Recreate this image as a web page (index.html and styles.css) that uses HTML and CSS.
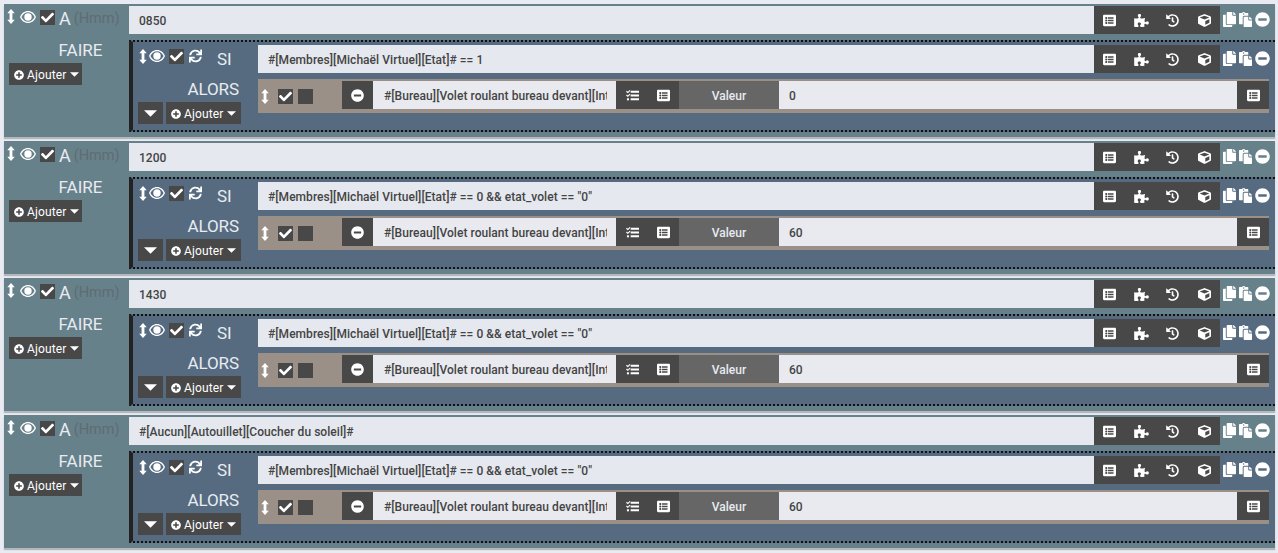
FILE: index.html
```html
<!DOCTYPE html>
<html lang="fr">
<head>
<meta charset="utf-8">
<title>Scénario</title>
<link rel="stylesheet" href="styles.css">
</head>
<body>
<svg class="sprite" xmlns="http://www.w3.org/2000/svg">
<symbol id="i-list" viewBox="0 0 512 512"><path d="M464 480H48c-26.51 0-48-21.49-48-48V80c0-26.51 21.49-48 48-48h416c26.51 0 48 21.49 48 48v352c0 26.51-21.49 48-48 48zM128 120c-22.091 0-40 17.909-40 40s17.909 40 40 40 40-17.909 40-40-17.909-40-40-40zm0 96c-22.091 0-40 17.909-40 40s17.909 40 40 40 40-17.909 40-40-17.909-40-40-40zm0 96c-22.091 0-40 17.909-40 40s17.909 40 40 40 40-17.909 40-40-17.909-40-40-40zm288-136v-32c0-6.627-5.373-12-12-12H204c-6.627 0-12 5.373-12 12v32c0 6.627 5.373 12 12 12h200c6.627 0 12-5.373 12-12zm0 96v-32c0-6.627-5.373-12-12-12H204c-6.627 0-12 5.373-12 12v32c0 6.627 5.373 12 12 12h200c6.627 0 12-5.373 12-12zm0 96v-32c0-6.627-5.373-12-12-12H204c-6.627 0-12 5.373-12 12v32c0 6.627 5.373 12 12 12h200c6.627 0 12-5.373 12-12z"/></symbol>
<symbol id="i-puzzle" viewBox="0 0 576 512"><path d="M519.442 288.651c-41.519 0-59.5 31.593-82.058 31.593C377.409 320.244 432 144 432 144s-196.288 80-196.288-3.297c0-35.827 36.288-46.25 36.288-85.985C272 19.216 243.885 0 210.539 0c-34.654 0-66.366 18.891-66.366 56.346 0 41.364 31.711 59.277 31.711 81.75C175.885 207.719 0 166.758 0 166.758v333.237s178.635 41.047 178.635-28.662c0-22.473-40-40.107-40-81.471 0-37.456 29.25-56.346 63.577-56.346 33.673 0 61.788 19.216 61.788 54.717 0 39.735-36.288 50.158-36.288 85.985 0 60.803 129.675 25.73 181.23 25.73 0 0-34.725-120.101 25.827-120.101 35.962 0 46.423 36.152 86.308 36.152C556.712 416 576 387.99 576 354.443c0-34.199-18.962-65.792-56.558-65.792z"/></symbol>
<symbol id="i-history" viewBox="0 0 512 512"><path d="M504 255.531c.253 136.64-111.18 248.372-247.82 248.468-59.015.042-113.223-20.53-155.822-54.911-11.077-8.94-11.905-25.541-1.839-35.607l11.267-11.267c8.609-8.609 22.353-9.551 31.891-1.984C173.062 425.135 212.781 440 256 440c101.705 0 184-82.311 184-184 0-101.705-82.311-184-184-184-48.814 0-93.149 18.969-126.068 49.932l50.754 50.754c10.08 10.08 2.941 27.314-11.313 27.314H24c-8.837 0-16-7.163-16-16V38.627c0-14.254 17.234-21.393 27.314-11.314l49.372 49.372C129.209 34.136 189.552 8 256 8c136.81 0 247.747 110.78 248 247.531zm-180.912 78.784l9.823-12.63c8.138-10.463 6.253-25.542-4.21-33.679L288 256.349V152c0-13.255-10.745-24-24-24h-16c-13.255 0-24 10.745-24 24v135.651l65.409 50.874c10.463 8.137 25.541 6.253 33.679-4.21z"/></symbol>
<symbol id="i-cube" viewBox="0 0 512 512"><path d="M239.1 6.3l-208 78c-18.7 7-31.1 25-31.1 45v225.1c0 18.2 10.3 34.8 26.5 42.9l208 104c13.5 6.8 29.4 6.8 42.9 0l208-104c16.3-8.1 26.5-24.8 26.5-42.9V129.3c0-20-12.4-37.9-31.1-44.9l-208-78C262 2.2 250 2.2 239.1 6.3zM256 68.4l192 72v1.1l-192 78-192-78v-1.1l192-72zm32 356V275.5l160-65v133.9l-160 80z"/></symbol>
<symbol id="i-copy" viewBox="0 0 448 512"><path d="M320 448v40c0 13.255-10.745 24-24 24H24c-13.255 0-24-10.745-24-24V120c0-13.255 10.745-24 24-24h72v296c0 30.879 25.121 56 56 56h168zm0-344V0H152c-13.255 0-24 10.745-24 24v368c0 13.255 10.745 24 24 24h272c13.255 0 24-10.745 24-24V128H344c-13.2 0-24-10.8-24-24zm120.971-31.029L375.029 7.029A24 24 0 0 0 358.059 0H352v96h96v-6.059a24 24 0 0 0-7.029-16.97z"/></symbol>
<symbol id="i-paste" viewBox="0 0 448 512"><path d="M128 184c0-30.879 25.122-56 56-56h136V56c0-13.255-10.745-24-24-24h-80.61C204.306 12.89 183.637 0 160 0s-44.306 12.89-55.39 32H24C10.745 32 0 42.745 0 56v336c0 13.255 10.745 24 24 24h104V184zm32-144c13.255 0 24 10.745 24 24s-10.745 24-24 24-24-10.745-24-24 10.745-24 24-24zm184 248h104v200c0 13.255-10.745 24-24 24H184c-13.255 0-24-10.745-24-24V184c0-13.255 10.745-24 24-24h136v104c0 13.2 10.8 24 24 24zm104-38.059V256h-96v-96h6.059a24 24 0 0 1 16.97 7.029l65.941 65.941a24.002 24.002 0 0 1 7.03 16.971z"/></symbol>
<symbol id="i-minus" viewBox="0 0 512 512"><path d="M256 8C119 8 8 119 8 256s111 248 248 248 248-111 248-248S393 8 256 8zM124 296c-6.6 0-12-5.4-12-12v-56c0-6.6 5.4-12 12-12h264c6.6 0 12 5.4 12 12v56c0 6.6-5.4 12-12 12H124z"/></symbol>
<symbol id="i-plus" viewBox="0 0 512 512"><path d="M256 8C119 8 8 119 8 256s111 248 248 248 248-111 248-248S393 8 256 8zm144 276c0 6.6-5.4 12-12 12h-92v92c0 6.6-5.4 12-12 12h-56c-6.6 0-12-5.4-12-12v-92h-92c-6.6 0-12-5.4-12-12v-56c0-6.6 5.4-12 12-12h92v-92c0-6.6 5.4-12 12-12h56c6.6 0 12 5.4 12 12v92h92c6.6 0 12 5.4 12 12v56z"/></symbol>
<symbol id="i-check" viewBox="0 0 512 512"><path d="M173.898 439.404l-166.4-166.4c-9.997-9.997-9.997-26.206 0-36.204l36.203-36.204c9.997-9.998 26.207-9.998 36.204 0L192 312.69 432.095 72.596c9.997-9.997 26.207-9.997 36.204 0l36.203 36.204c9.997 9.997 9.997 26.206 0 36.204l-294.4 294.401c-9.998 9.997-26.207 9.997-36.204-.001z"/></symbol>
<symbol id="i-sync" viewBox="0 0 512 512"><path d="M440.65 12.57l4 82.77A247.16 247.16 0 0 0 255.83 8C134.73 8 33.91 94.92 12.29 209.82A12 12 0 0 0 24.09 224h49.05a12 12 0 0 0 11.67-9.26 175.91 175.91 0 0 1 317-56.94l-101.46-4.86a12 12 0 0 0-12.57 12v47.41a12 12 0 0 0 12 12H500a12 12 0 0 0 12-12V12a12 12 0 0 0-12-12h-47.37a12 12 0 0 0-11.98 12.57zM255.83 432a175.61 175.61 0 0 1-146-77.8l101.8 4.87a12 12 0 0 0 12.57-12v-47.4a12 12 0 0 0-12-12H12a12 12 0 0 0-12 12V500a12 12 0 0 0 12 12h47.35a12 12 0 0 0 12-12.6l-4.15-82.57A247.17 247.17 0 0 0 255.83 504c121.11 0 221.93-86.92 243.55-201.82a12 12 0 0 0-11.8-14.18h-49.05a12 12 0 0 0-11.67 9.26A175.86 175.86 0 0 1 255.83 432z"/></symbol>
<symbol id="i-eye" viewBox="0 0 16 12"><path fill-rule="evenodd" d="M8 0c3.600 0 6.600 2.300 8 6-1.400 3.700-4.400 6-8 6S1.400 9.700 0 6c1.400-3.700 4.400-6 8-6zM8 1.200C5.300 1.200 2.900 2.900 1.400 6 2.900 9.100 5.300 10.800 8 10.800S13.100 9.100 14.600 6C13.100 2.900 10.700 1.200 8 1.200zM8 2.300A3.700 3.700 0 1 1 8 9.700 3.700 3.700 0 0 1 8 2.300z"/></symbol>
<symbol id="i-arrows" viewBox="0 0 8 16"><path d="M4 0l4 4.500H5.500v7H8L4 16 0 11.500h2.500v-7H0z"/></symbol>
<symbol id="i-caret" viewBox="0 0 10 5"><path d="M0 0h10L5 5z"/></symbol>
<symbol id="i-tasks" viewBox="0 0 14 12"><path d="M5 1h9v2H5zM5 5h9v2H5zM5 9h9v2H5z"/><path d="M0 2l1-1 1 1 2-2 .8.800L2 3.600zM0 6l1-1 1 1 2-2 .8.800L2 7.600z"/><rect x="1" y="9" width="2.200" height="2.200"/></symbol>
</svg>

<main class="page">
<section class="block">
  <div class="side">
    <div class="head"><svg class="ic arrows"><use href="#i-arrows"/></svg><svg class="ic eye"><use href="#i-eye"/></svg><span class="box"><svg class="ic tick"><use href="#i-check"/></svg></span><span class="a">A</span><span class="hmm">(Hmm)</span></div>
    <div class="faire">FAIRE</div>
    <button class="add"><svg class="ic plus"><use href="#i-plus"/></svg>Ajouter<svg class="ic caret"><use href="#i-caret"/></svg></button>
  </div>
  <div class="main">
    <div class="line"><div class="field">0850</div><div class="acts"><svg class="ic act"><use href="#i-list"/></svg><svg class="ic act"><use href="#i-puzzle"/></svg><svg class="ic act"><use href="#i-history"/></svg><svg class="ic act"><use href="#i-cube"/></svg></div><div class="tools"><svg class="ic tool"><use href="#i-copy"/></svg><svg class="ic tool"><use href="#i-paste"/></svg><svg class="ic tool round"><use href="#i-minus"/></svg></div></div>
    <div class="nested">
      <div class="nside">
        <div class="nhead"><svg class="ic arrows"><use href="#i-arrows"/></svg><svg class="ic eye"><use href="#i-eye"/></svg><span class="box"><svg class="ic tick"><use href="#i-check"/></svg></span><svg class="ic sync"><use href="#i-sync"/></svg><span class="si">SI</span></div>
        <div class="alors">ALORS</div>
        <div class="nbtns"><button class="down"><svg class="ic bigcaret"><use href="#i-caret"/></svg></button><button class="add"><svg class="ic plus"><use href="#i-plus"/></svg>Ajouter<svg class="ic caret"><use href="#i-caret"/></svg></button></div>
      </div>
      <div class="nmain">
        <div class="line"><div class="field">#[Membres][Michaël Virtuel][Etat]# == 1</div><div class="acts"><svg class="ic act"><use href="#i-list"/></svg><svg class="ic act"><use href="#i-puzzle"/></svg><svg class="ic act"><use href="#i-history"/></svg><svg class="ic act"><use href="#i-cube"/></svg></div><div class="tools"><svg class="ic tool"><use href="#i-copy"/></svg><svg class="ic tool"><use href="#i-paste"/></svg><svg class="ic tool round"><use href="#i-minus"/></svg></div></div>
        <div class="action"><div class="ahead"><svg class="ic arrows"><use href="#i-arrows"/></svg><span class="box"><svg class="ic tick"><use href="#i-check"/></svg></span><span class="box"></span></div><div class="amin"><svg class="ic act"><use href="#i-minus"/></svg></div><div class="cmd"><span>#[Bureau][Volet roulant bureau devant][Int</span></div><div class="apair"><svg class="ic act"><use href="#i-tasks"/></svg><svg class="ic act"><use href="#i-list"/></svg></div><div class="vlabel">Valeur</div><div class="vfield">0</div><div class="aend"><svg class="ic act"><use href="#i-list"/></svg></div></div>
      </div>
    </div>
  </div>
</section>

<section class="block">
  <div class="side">
    <div class="head"><svg class="ic arrows"><use href="#i-arrows"/></svg><svg class="ic eye"><use href="#i-eye"/></svg><span class="box"><svg class="ic tick"><use href="#i-check"/></svg></span><span class="a">A</span><span class="hmm">(Hmm)</span></div>
    <div class="faire">FAIRE</div>
    <button class="add"><svg class="ic plus"><use href="#i-plus"/></svg>Ajouter<svg class="ic caret"><use href="#i-caret"/></svg></button>
  </div>
  <div class="main">
    <div class="line"><div class="field">1200</div><div class="acts"><svg class="ic act"><use href="#i-list"/></svg><svg class="ic act"><use href="#i-puzzle"/></svg><svg class="ic act"><use href="#i-history"/></svg><svg class="ic act"><use href="#i-cube"/></svg></div><div class="tools"><svg class="ic tool"><use href="#i-copy"/></svg><svg class="ic tool"><use href="#i-paste"/></svg><svg class="ic tool round"><use href="#i-minus"/></svg></div></div>
    <div class="nested">
      <div class="nside">
        <div class="nhead"><svg class="ic arrows"><use href="#i-arrows"/></svg><svg class="ic eye"><use href="#i-eye"/></svg><span class="box"><svg class="ic tick"><use href="#i-check"/></svg></span><svg class="ic sync"><use href="#i-sync"/></svg><span class="si">SI</span></div>
        <div class="alors">ALORS</div>
        <div class="nbtns"><button class="down"><svg class="ic bigcaret"><use href="#i-caret"/></svg></button><button class="add"><svg class="ic plus"><use href="#i-plus"/></svg>Ajouter<svg class="ic caret"><use href="#i-caret"/></svg></button></div>
      </div>
      <div class="nmain">
        <div class="line"><div class="field">#[Membres][Michaël Virtuel][Etat]# == 0 &amp;&amp; etat_volet == "0"</div><div class="acts"><svg class="ic act"><use href="#i-list"/></svg><svg class="ic act"><use href="#i-puzzle"/></svg><svg class="ic act"><use href="#i-history"/></svg><svg class="ic act"><use href="#i-cube"/></svg></div><div class="tools"><svg class="ic tool"><use href="#i-copy"/></svg><svg class="ic tool"><use href="#i-paste"/></svg><svg class="ic tool round"><use href="#i-minus"/></svg></div></div>
        <div class="action"><div class="ahead"><svg class="ic arrows"><use href="#i-arrows"/></svg><span class="box"><svg class="ic tick"><use href="#i-check"/></svg></span><span class="box"></span></div><div class="amin"><svg class="ic act"><use href="#i-minus"/></svg></div><div class="cmd"><span>#[Bureau][Volet roulant bureau devant][Int</span></div><div class="apair"><svg class="ic act"><use href="#i-tasks"/></svg><svg class="ic act"><use href="#i-list"/></svg></div><div class="vlabel">Valeur</div><div class="vfield">60</div><div class="aend"><svg class="ic act"><use href="#i-list"/></svg></div></div>
      </div>
    </div>
  </div>
</section>

<section class="block">
  <div class="side">
    <div class="head"><svg class="ic arrows"><use href="#i-arrows"/></svg><svg class="ic eye"><use href="#i-eye"/></svg><span class="box"><svg class="ic tick"><use href="#i-check"/></svg></span><span class="a">A</span><span class="hmm">(Hmm)</span></div>
    <div class="faire">FAIRE</div>
    <button class="add"><svg class="ic plus"><use href="#i-plus"/></svg>Ajouter<svg class="ic caret"><use href="#i-caret"/></svg></button>
  </div>
  <div class="main">
    <div class="line"><div class="field">1430</div><div class="acts"><svg class="ic act"><use href="#i-list"/></svg><svg class="ic act"><use href="#i-puzzle"/></svg><svg class="ic act"><use href="#i-history"/></svg><svg class="ic act"><use href="#i-cube"/></svg></div><div class="tools"><svg class="ic tool"><use href="#i-copy"/></svg><svg class="ic tool"><use href="#i-paste"/></svg><svg class="ic tool round"><use href="#i-minus"/></svg></div></div>
    <div class="nested">
      <div class="nside">
        <div class="nhead"><svg class="ic arrows"><use href="#i-arrows"/></svg><svg class="ic eye"><use href="#i-eye"/></svg><span class="box"><svg class="ic tick"><use href="#i-check"/></svg></span><svg class="ic sync"><use href="#i-sync"/></svg><span class="si">SI</span></div>
        <div class="alors">ALORS</div>
        <div class="nbtns"><button class="down"><svg class="ic bigcaret"><use href="#i-caret"/></svg></button><button class="add"><svg class="ic plus"><use href="#i-plus"/></svg>Ajouter<svg class="ic caret"><use href="#i-caret"/></svg></button></div>
      </div>
      <div class="nmain">
        <div class="line"><div class="field">#[Membres][Michaël Virtuel][Etat]# == 0 &amp;&amp; etat_volet == "0"</div><div class="acts"><svg class="ic act"><use href="#i-list"/></svg><svg class="ic act"><use href="#i-puzzle"/></svg><svg class="ic act"><use href="#i-history"/></svg><svg class="ic act"><use href="#i-cube"/></svg></div><div class="tools"><svg class="ic tool"><use href="#i-copy"/></svg><svg class="ic tool"><use href="#i-paste"/></svg><svg class="ic tool round"><use href="#i-minus"/></svg></div></div>
        <div class="action"><div class="ahead"><svg class="ic arrows"><use href="#i-arrows"/></svg><span class="box"><svg class="ic tick"><use href="#i-check"/></svg></span><span class="box"></span></div><div class="amin"><svg class="ic act"><use href="#i-minus"/></svg></div><div class="cmd"><span>#[Bureau][Volet roulant bureau devant][Int</span></div><div class="apair"><svg class="ic act"><use href="#i-tasks"/></svg><svg class="ic act"><use href="#i-list"/></svg></div><div class="vlabel">Valeur</div><div class="vfield">60</div><div class="aend"><svg class="ic act"><use href="#i-list"/></svg></div></div>
      </div>
    </div>
  </div>
</section>

<section class="block">
  <div class="side">
    <div class="head"><svg class="ic arrows"><use href="#i-arrows"/></svg><svg class="ic eye"><use href="#i-eye"/></svg><span class="box"><svg class="ic tick"><use href="#i-check"/></svg></span><span class="a">A</span><span class="hmm">(Hmm)</span></div>
    <div class="faire">FAIRE</div>
    <button class="add"><svg class="ic plus"><use href="#i-plus"/></svg>Ajouter<svg class="ic caret"><use href="#i-caret"/></svg></button>
  </div>
  <div class="main">
    <div class="line"><div class="field">#[Aucun][Autouillet][Coucher du soleil]#</div><div class="acts"><svg class="ic act"><use href="#i-list"/></svg><svg class="ic act"><use href="#i-puzzle"/></svg><svg class="ic act"><use href="#i-history"/></svg><svg class="ic act"><use href="#i-cube"/></svg></div><div class="tools"><svg class="ic tool"><use href="#i-copy"/></svg><svg class="ic tool"><use href="#i-paste"/></svg><svg class="ic tool round"><use href="#i-minus"/></svg></div></div>
    <div class="nested">
      <div class="nside">
        <div class="nhead"><svg class="ic arrows"><use href="#i-arrows"/></svg><svg class="ic eye"><use href="#i-eye"/></svg><span class="box"><svg class="ic tick"><use href="#i-check"/></svg></span><svg class="ic sync"><use href="#i-sync"/></svg><span class="si">SI</span></div>
        <div class="alors">ALORS</div>
        <div class="nbtns"><button class="down"><svg class="ic bigcaret"><use href="#i-caret"/></svg></button><button class="add"><svg class="ic plus"><use href="#i-plus"/></svg>Ajouter<svg class="ic caret"><use href="#i-caret"/></svg></button></div>
      </div>
      <div class="nmain">
        <div class="line"><div class="field">#[Membres][Michaël Virtuel][Etat]# == 0 &amp;&amp; etat_volet == "0"</div><div class="acts"><svg class="ic act"><use href="#i-list"/></svg><svg class="ic act"><use href="#i-puzzle"/></svg><svg class="ic act"><use href="#i-history"/></svg><svg class="ic act"><use href="#i-cube"/></svg></div><div class="tools"><svg class="ic tool"><use href="#i-copy"/></svg><svg class="ic tool"><use href="#i-paste"/></svg><svg class="ic tool round"><use href="#i-minus"/></svg></div></div>
        <div class="action"><div class="ahead"><svg class="ic arrows"><use href="#i-arrows"/></svg><span class="box"><svg class="ic tick"><use href="#i-check"/></svg></span><span class="box"></span></div><div class="amin"><svg class="ic act"><use href="#i-minus"/></svg></div><div class="cmd"><span>#[Bureau][Volet roulant bureau devant][Int</span></div><div class="apair"><svg class="ic act"><use href="#i-tasks"/></svg><svg class="ic act"><use href="#i-list"/></svg></div><div class="vlabel">Valeur</div><div class="vfield">60</div><div class="aend"><svg class="ic act"><use href="#i-list"/></svg></div></div>
      </div>
    </div>
  </div>
</section>
</main>
</body>
</html>
```

FILE: styles.css
```css
* { box-sizing: border-box; }
html, body { margin: 0; height: 553px; overflow: hidden; }
body { background: #e8ebf1; font-family: Roboto, "Liberation Sans", sans-serif; }
.sprite { display: none; }
.page { display: flex; flex-direction: column; gap: 4px; padding: 4px 3px 0 4px; }
.ic { display: block; fill: #fff; flex: none; }

.block { display: flex; height: 133px; background: #67818a; box-shadow: 0 2px 1px #b5b8bb; padding: 2px 0 5px; }
.side { width: 125px; flex: none; padding-left: 3px; }
.main { flex: 1; min-width: 0; display: flex; flex-direction: column; gap: 6px; }

.head { display: flex; align-items: center; height: 23px; }
.head .arrows { width: 8px; height: 15px; margin: 0 5px 2px 0; }
.eye { width: 16px; height: 12px; }
.head .eye { margin: 0 4px 2px 0; }
.box { width: 15px; height: 15px; background: #484848; display: flex; align-items: center; justify-content: center; flex: none; }
.tick { width: 13px; height: 13px; }
.a { font-size: 18px; color: #e8ebf1; margin: 2px 0 0 4px; line-height: 20px; }
.hmm { font-size: 14.5px; color: #5f6c74; margin: 2px 0 0 3px; }
.faire { font-size: 17px; color: #e8ebf1; text-align: center; margin: 11px 0 3px 20px; line-height: 20px; width: 107px; }
.add { display: inline-flex; align-items: center; height: 22px; width: 73px; padding: 1px 0 0 5px; margin: 0 0 0 2px; background: #484848; border: 0; color: #fff; font: 400 12px Roboto, sans-serif; letter-spacing: .12px; }
.plus { width: 10px; height: 10px; margin-right: 3px; }
.caret { width: 9px; height: 5px; margin-left: 4px; }

.line { display: flex; height: 28px; flex: none; }
.field { flex: 1; min-width: 0; background: #e5e8ef; padding-left: 10px; font-size: 12px; font-weight: 500; letter-spacing: .05px; line-height: 30px; color: #444; white-space: nowrap; overflow: hidden; }
.acts { width: 126px; flex: none; background: #484848; display: grid; grid-template-columns: repeat(4, 31.5px); align-items: center; justify-items: center; padding-top: 1px; }
.act { width: 13px; height: 13px; }
.acts .act:nth-child(2) { width: 15px; }
.tools { width: 55px; flex: none; display: flex; align-items: flex-start; padding: 6px 0 0 3px; gap: 3px; }
.tool { width: 13px; height: 15px; }
.round { width: 15px; height: 15px; }

.nested { display: flex; height: 92px; background: #566b80; border-top: 2px dotted #111; border-bottom: 2px dotted #111; border-left: 4px solid #222; }
.nside { width: 125px; flex: none; padding-top: 3px; }
.nhead { display: flex; align-items: flex-start; height: 22px; padding: 4px 0 0 6px; }
.nhead .arrows { width: 8px; height: 15px; margin-right: 2px; }
.nhead .eye { margin: 1px 4px 0 0; }
.sync { width: 13px; height: 14px; margin-left: 5px; }
.si { font-size: 17px; color: #e8ebf1; margin: 1px 0 0 15px; line-height: 18px; }
.alors { font-size: 17px; letter-spacing: -.1px; color: #e8ebf1; text-align: right; padding-right: 19px; margin-top: 12px; line-height: 20px; }
.nbtns { display: flex; gap: 3px; padding: 3px 0 0 5px; }
.down { width: 25px; height: 22px; background: #484848; border: 0; padding: 0; display: flex; align-items: center; justify-content: center; }
.bigcaret { width: 13px; height: 7px; }
.nbtns .add { width: 75px; margin: 0; padding-left: 5px; }

.nmain { flex: 1; min-width: 0; padding-top: 3px; display: flex; flex-direction: column; gap: 6px; }
.action { display: flex; align-items: stretch; height: 34px; margin-right: 6px; background: #9a9087; padding: 2px 0 4px; font-size: 12px; font-weight: 500; }
.ahead { width: 84px; flex: none; display: flex; align-items: center; padding: 2px 0 0 3px; gap: 5px; }
.ahead .arrows { width: 8px; height: 15px; margin-right: 4px; }
.amin { width: 31px; flex: none; background: #484848; display: flex; align-items: center; justify-content: center; }
.cmd { width: 243px; flex: none; background: #e9eaef; padding: 0 9px 0 11px; line-height: 30px; letter-spacing: .05px; color: #444; }
.cmd span { display: block; overflow: hidden; white-space: nowrap; height: 28px; }
.apair { width: 63px; flex: none; background: #484848; display: flex; align-items: center; padding-left: 10px; gap: 18px; }
.vlabel { width: 100px; flex: none; background: #666; color: #e8ebf1; text-align: center; line-height: 30px; }
.vfield { flex: 1; min-width: 0; background: #e9eaef; padding-left: 10px; line-height: 30px; color: #444; }
.aend { width: 32px; flex: none; background: #484848; display: flex; align-items: center; justify-content: center; }
```
